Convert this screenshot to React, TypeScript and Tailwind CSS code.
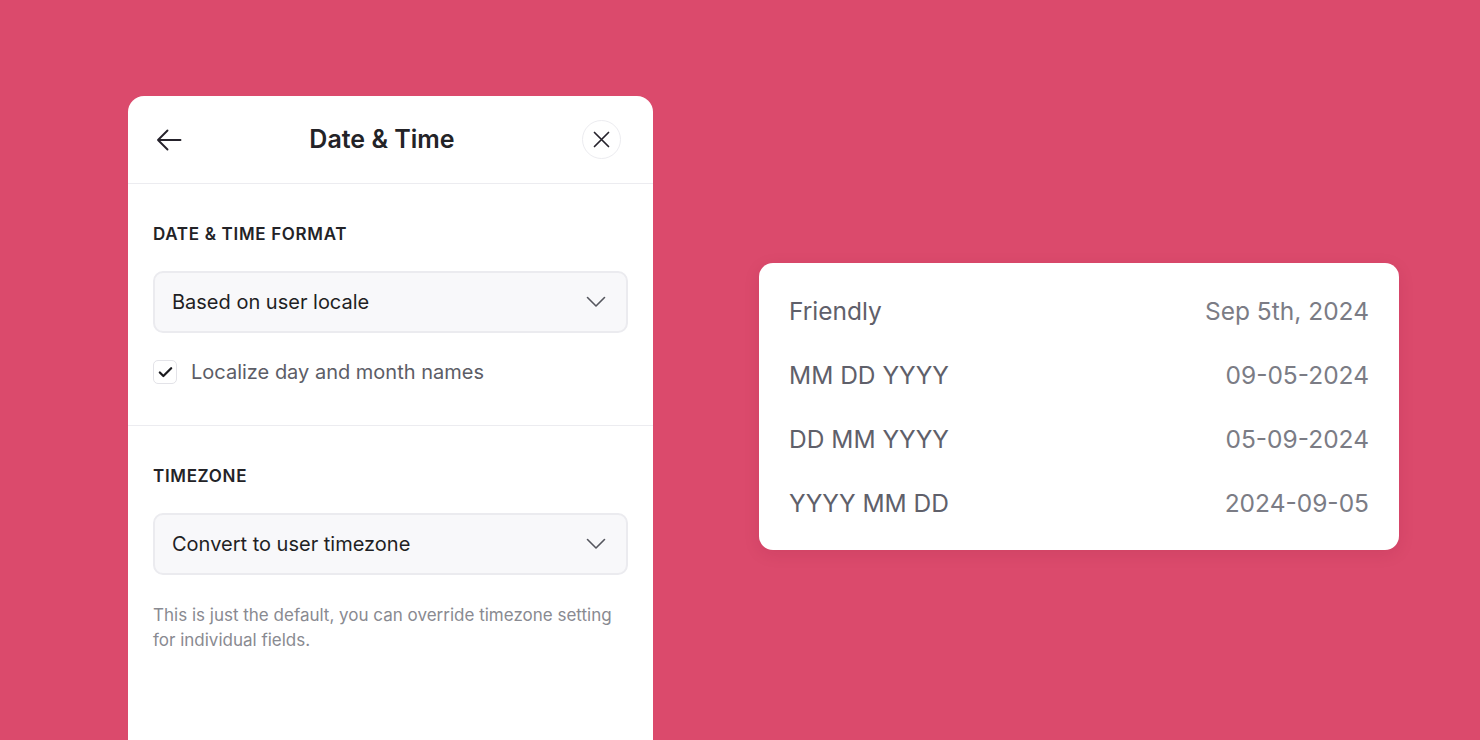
import { Check } from 'lucide-react';

const FORMATS = [
  { label: 'Friendly', value: 'Sep 5th, 2024' },
  { label: 'MM DD YYYY', value: '09-05-2024' },
  { label: 'DD MM YYYY', value: '05-09-2024' },
  { label: 'YYYY MM DD', value: '2024-09-05' },
];

function SelectBox({ text }: { text: string }) {
  return (
    <div className="flex h-[62px] items-center justify-between rounded-[10px] border-2 border-[#ebebef] bg-[#f8f8fa] pl-[17px] pr-[20px]">
      <span className="text-[20px] leading-6 text-[#1f1f24]">{text}</span>
      <svg width="20" height="12" viewBox="0 0 20 12" fill="none" className="text-[#55565e]">
        <path d="M1.5 1.5 10 10l8.5-8.5" stroke="currentColor" strokeWidth="1.6" strokeLinecap="round" strokeLinejoin="round" />
      </svg>
    </div>
  );
}

export default function App() {
  return (
    <div
      className="flex h-[740px] w-[1480px] items-start overflow-hidden bg-[#db4a6c] pl-[128px] pt-[96px]"
      style={{ fontFamily: 'Inter, "Noto Sans", sans-serif' }}
    >
      <div className="h-[700px] w-[525px] shrink-0 rounded-t-[16px] bg-white">
        <div className="flex h-[88px] items-center justify-between border-b border-[#ececf0] pl-[28px] pr-[32px]">
          <svg width="26" height="22" viewBox="0 0 26 22" fill="none" className="text-[#25222b]">
            <path d="M24.5 11H2M11.5 1.5 2 11l9.5 9.5" stroke="currentColor" strokeWidth="1.9" strokeLinecap="round" strokeLinejoin="round" />
          </svg>
          <h1 className="text-[25px] font-semibold text-[#232327]">Date &amp; Time</h1>
          <div className="flex h-[39px] w-[39px] items-center justify-center rounded-full border border-[#ececf0]">
            <svg width="17" height="17" viewBox="0 0 17 17" fill="none" className="text-[#25222b]">
              <path d="M1.5 1.5l14 14M15.5 1.5l-14 14" stroke="currentColor" strokeWidth="1.7" strokeLinecap="round" />
            </svg>
          </div>
        </div>

        <div className="border-b border-[#ececf0] px-[25px] pb-[41px] pt-[38px]">
          <div className="text-[17px] font-semibold leading-6 tracking-[0.04em] text-[#232327]">
            DATE &amp; TIME FORMAT
          </div>
          <div className="mt-[25px]">
            <SelectBox text="Based on user locale" />
          </div>
          <div className="mt-[27px] flex items-center gap-[14px]">
            <div className="flex h-[24px] w-[24px] items-center justify-center rounded-[5px] border border-[#e3e3e8] bg-white">
              <Check className="h-[17px] w-[17px] text-[#1b1b1f]" strokeWidth={3.2} />
            </div>
            <span className="text-[20px] leading-6 text-[#5c5d66]">Localize day and month names</span>
          </div>
        </div>

        <div className="px-[25px] pt-[38px]">
          <div className="text-[17px] font-semibold leading-6 tracking-[0.04em] text-[#232327]">
            TIMEZONE
          </div>
          <div className="mt-[25px]">
            <SelectBox text="Convert to user timezone" />
          </div>
          <p className="mt-[28px] text-[17px] leading-[25px] text-[#898a91]">
            This is just the default, you can override timezone setting for individual fields.
          </p>
        </div>
      </div>

      <div className="ml-[106px] mt-[167px] w-[640px] shrink-0 rounded-[14px] bg-white px-[30px] pb-[15px] pt-[16px] shadow-[0_4px_16px_rgba(120,20,50,0.12)]">
        {FORMATS.map((f) => (
          <div key={f.label} className="flex h-[64px] items-center justify-between text-[24.5px]">
            <span className="text-[#5f606a]">{f.label}</span>
            <span className="text-[#7b7c85]">{f.value}</span>
          </div>
        ))}
      </div>
    </div>
  );
}
